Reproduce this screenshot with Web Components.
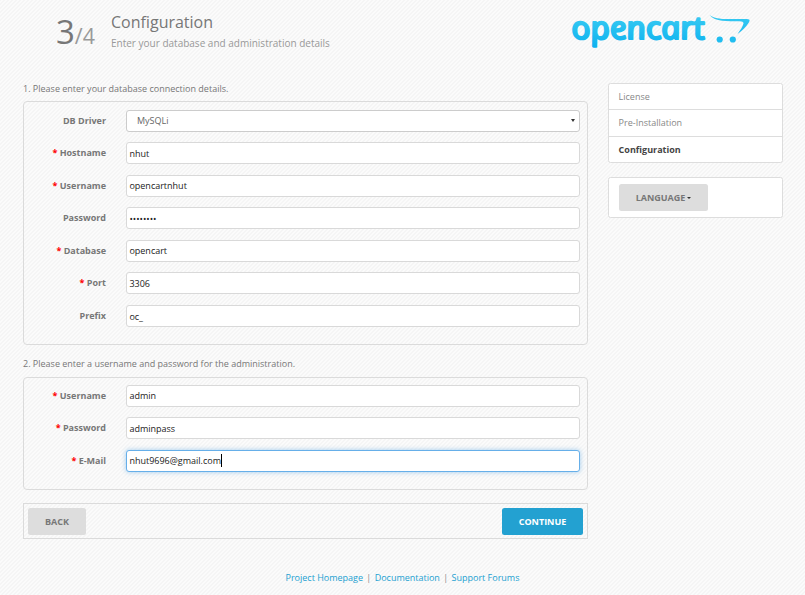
<!DOCTYPE html>
<html lang="en">
<head>
<meta charset="utf-8">
<title>Configuration</title>
<style>
body{margin:0;width:805px;height:595px;overflow:hidden;font:9px/13px "Open Sans","Noto Sans",sans-serif;color:#777;
background:#f8f8f8 linear-gradient(135deg,#f5f5f5 12.5%,#fbfbfb 12.5% 37.5%,#f5f5f5 37.5% 62.5%,#fbfbfb 62.5% 87.5%,#f5f5f5 87.5%) 0 0/4px 4px}
</style>
</head>
<body>
<install-page></install-page>
<script>
const define=(name,html)=>{
  const t=document.createElement('template');
  t.innerHTML=html;
  customElements.define(name,class extends HTMLElement{
    constructor(){
      super();
      this.attachShadow({mode:'open'}).append(t.content.cloneNode(true));
    }
    connectedCallback(){
      for(const el of this.shadowRoot.querySelectorAll('[data-if]'))
        el.hidden=!this.hasAttribute(el.dataset.if);
    }
  });
};

define('oc-logo',`<style>:host{display:block;width:182px;height:40px}svg{display:block;overflow:visible}</style>
<svg width="182" height="40" viewBox="570.5 10 182 40">
<defs><linearGradient id="g" gradientUnits="userSpaceOnUse" x1="0" y1="14" x2="0" y2="48"><stop offset="0" stop-color="#3acbf2"/><stop offset="1" stop-color="#0cb1ef"/></linearGradient>
<linearGradient id="w" gradientUnits="userSpaceOnUse" x1="0" y1="-25" x2="0" y2="9"><stop offset="0" stop-color="#3acbf2"/><stop offset="1" stop-color="#0cb1ef"/></linearGradient></defs>
<text transform="translate(572.8 39) skewX(12)" textLength="133" lengthAdjust="spacingAndGlyphs" font-family="Open Sans" font-style="italic" font-size="31.5" fill="url(#w)" stroke="url(#w)" stroke-width="2.2" stroke-linejoin="round">opencart</text>
<path d="M709 15C714 18.7 722 19.3 730 19H746Q750.5 19 748.5 22.2C745.5 27 741.5 30.5 737 34C739.8 29.7 742.4 26.8 743 23.2Q743 21.3 739 21.2C727 21 714.5 22 709 15Z" fill="url(#g)"/>
<circle cx="719.2" cy="39.5" r="3.1" fill="#20bdf0"/><circle cx="732.3" cy="39.5" r="3.1" fill="#20bdf0"/></svg>`);

define('page-head',`<style>
:host{display:flex;height:83px;padding:0 0 0 24px;box-sizing:border-box}
.n{width:71px;text-align:right;font-size:33px;line-height:40px;padding-top:12px;color:#777;white-space:nowrap}
.n small{font-size:21.5px;color:#999}
.t{margin-left:16px;width:460px;padding-top:11px}
h1{margin:0;font-weight:400;font-size:16px;line-height:22px}
p{margin:3px 0 0;font-size:10px;line-height:14px;color:#999}
oc-logo{margin-top:10px}
</style><div class="n">3<small>/4</small></div><div class="t"><h1>Configuration</h1><p>Enter your database and administration details</p></div><oc-logo></oc-logo>`);

define('form-row',`<style>
:host{display:grid;grid-template-columns:82px 454px;column-gap:20px;height:32.6px;box-sizing:border-box}
label{text-align:right;font-weight:700;line-height:21px}
i{font-style:normal;color:#f00}
.f{box-sizing:border-box;height:22px;border:1px solid #d9d9d9;border-radius:3px;background:#fff;color:#222;padding:0 2.4px;line-height:21px;display:flex;align-items:center}
:host([select]) .f{border-color:#ccc;color:#666;padding-left:10px}
:host([focused]) .f{border-color:#66afe9;box-shadow:0 0 5px rgba(102,175,233,.6)}
.c{width:1px;height:13px;background:#000}
.a{margin-left:auto;border:2px solid transparent;border-top:3px solid #333;border-bottom:0;margin-right:2px}
[hidden]{display:none}
</style><label><i data-if="required">* </i><slot name="label"></slot></label>
<div class="f"><slot></slot><span class="c" data-if="focused"></span><span class="a" data-if="select"></span></div>`);

define('form-group',`<style>
:host{display:block}
p{margin:0;height:var(--t,19px);line-height:13px}
.b{box-sizing:border-box;height:var(--h);border:1px solid #dbdbdb;border-radius:4px;padding:var(--p,7.5px) 0 0}
</style><p><slot name="title"></slot></p><div class="b"><slot></slot></div>`);

define('ui-button',`<style>
:host{display:flex;align-items:center;justify-content:center;box-sizing:border-box;width:var(--w,58px);height:27px;border-radius:2.5px;background:#ddd;color:#777;font-weight:700}
:host([primary]){background:#23a1d1;color:#fff}
span{border:2px solid transparent;border-top:2.5px solid #333;border-bottom:0;margin-left:2px}
[hidden]{display:none}
</style><slot></slot><span data-if="caret"></span>`);

define('step-item',`<style>
:host{display:block;box-sizing:border-box;height:26px;padding-left:9.6px;line-height:26px;border-bottom:1px solid #ddd;color:#888}
:host(:nth-child(2)){height:27px}
:host([active]){font-weight:700;color:#444}
:host(:last-child){border:0}
</style><slot></slot>`);

define('side-bar',`<style>
:host{display:block}
.s,.l{border:1px solid #ddd;border-radius:2.5px;background:#fff;box-sizing:border-box}
.s{height:80px}
.l{margin-top:14px;height:41px;padding:6px 10px}
</style><div class="s"><step-item>License</step-item><step-item>Pre-Installation</step-item><step-item active>Configuration</step-item></div>
<div class="l"><ui-button caret style="--w:89px">LANGUAGE</ui-button></div>`);

define('page-links',`<style>
:host{display:flex;justify-content:center;gap:3.4px;color:#888;letter-spacing:-.01px}
a{color:#23a1d1}
</style><a>Project Homepage</a><span>|</span><a>Documentation</a><span>|</span><a>Support Forums</a>`);

define('install-page',`<style>
:host{display:block;width:805px}
main{display:grid;grid-template-columns:565px 175px;column-gap:20px;padding-left:23px;height:488px}
.form{margin-top:-1px}
.g2{margin-top:12px}
.bar{margin-top:13px;display:flex;justify-content:space-between;align-items:center;height:36px;box-sizing:border-box;border:1px solid #dbdbdb;padding:0 4px}
</style><page-head></page-head>
<main><div class="form">
<form-group style="--h:244px"><span slot="title">1. Please enter your database connection details.</span>
<form-row select><span slot="label">DB Driver</span>MySQLi</form-row>
<form-row required><span slot="label">Hostname</span>nhut</form-row>
<form-row required><span slot="label">Username</span>opencartnhut</form-row>
<form-row><span slot="label">Password</span>••••••••</form-row>
<form-row required><span slot="label">Database</span>opencart</form-row>
<form-row required><span slot="label">Port</span>3306</form-row>
<form-row><span slot="label">Prefix</span>oc_</form-row>
</form-group>
<form-group class="g2" style="--h:113px;--t:20px;--p:6.6px"><span slot="title">2. Please enter a username and password for the administration.</span>
<form-row required><span slot="label">Username</span>admin</form-row>
<form-row required><span slot="label">Password</span>adminpass</form-row>
<form-row required focused><span slot="label">E-Mail</span>nhut9696@gmail.com</form-row>
</form-group>
<div class="bar"><ui-button>BACK</ui-button><ui-button primary style="--w:81px">CONTINUE</ui-button></div>
</div><side-bar></side-bar></main>
<page-links></page-links>`);
</script>
</body>
</html>
